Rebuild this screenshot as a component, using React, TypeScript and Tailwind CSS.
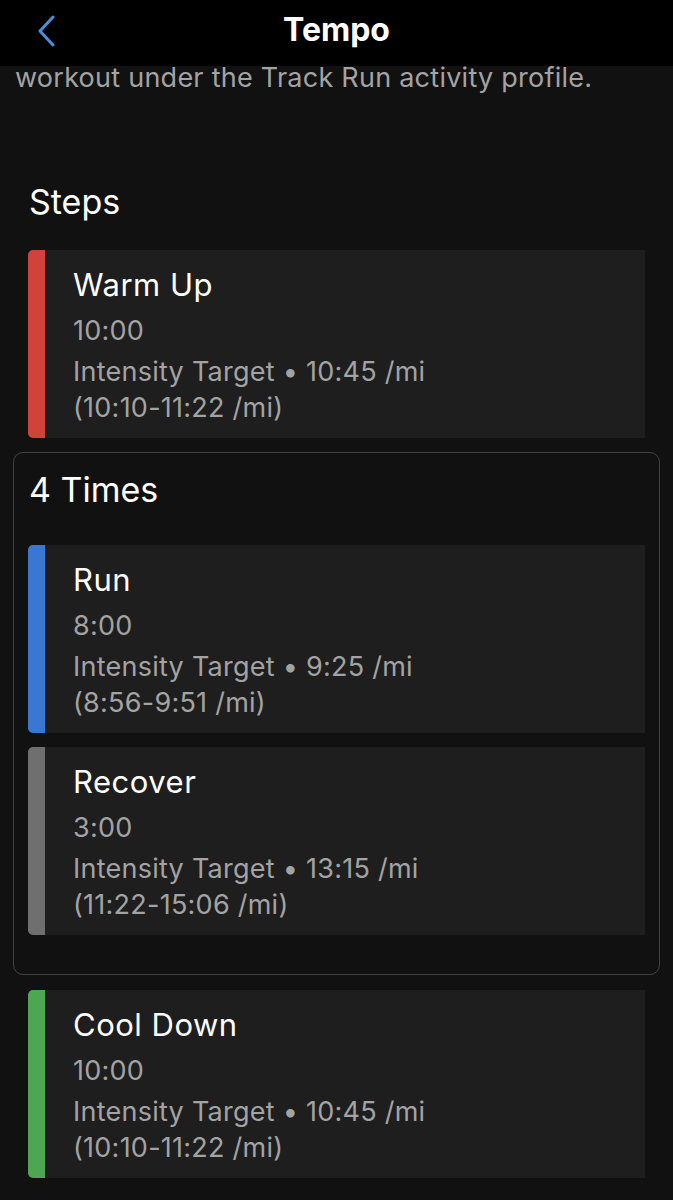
import React from 'react';

const font = { fontFamily: 'Inter, Roboto, "Noto Sans", sans-serif' };

type Step = {
  name: string;
  duration: string;
  target: string;
  range: string;
  bar: string;
};

const warmUp: Step = { name: 'Warm Up', duration: '10:00', target: '10:45 /mi', range: '(10:10-11:22 /mi)', bar: 'bg-[#d1433a]' };
const repeat: Step[] = [
  { name: 'Run', duration: '8:00', target: '9:25 /mi', range: '(8:56-9:51 /mi)', bar: 'bg-[#3a77d2]' },
  { name: 'Recover', duration: '3:00', target: '13:15 /mi', range: '(11:22-15:06 /mi)', bar: 'bg-[#6f6f6f]' },
];
const coolDown: Step = { name: 'Cool Down', duration: '10:00', target: '10:45 /mi', range: '(10:10-11:22 /mi)', bar: 'bg-[#4ea652]' };

function StepCard({ step }: { step: Step }) {
  return (
    <div className="flex h-[188px] bg-[#1e1e1e] rounded-l-[5px] overflow-hidden">
      <div className={`w-[17px] shrink-0 ${step.bar}`} />
      <div className="pl-[28px] pt-[13px] pb-[11px]">
        <div className="text-[31px] leading-[44px] tracking-[0.5px] text-white">{step.name}</div>
        <div className="mt-[6px] text-[27px] leading-[36px] tracking-[0.25px] text-[#a3a3a3]">{step.duration}</div>
        <div className="mt-[5px] text-[27px] leading-[36px] tracking-[0.25px] text-[#a3a3a3]">
          Intensity Target • {step.target}
          <br />
          {step.range}
        </div>
      </div>
    </div>
  );
}

export default function App() {
  return (
    <div className="w-[673px] h-[1200px] bg-[#111111] overflow-hidden" style={font}>
      <header className="h-[66px] bg-black grid grid-cols-[1fr_auto_1fr] items-center">
        <div className="pl-[37px] pb-[4px]">
          <svg width="18" height="32" viewBox="0 0 18 32" fill="none">
            <polyline points="16,2 3,16 16,30" stroke="#4d8ddc" strokeWidth="3" strokeLinecap="round" strokeLinejoin="round" />
          </svg>
        </div>
        <h1 className="text-[32px] font-bold text-white leading-[40px] pb-[7px]">Tempo</h1>
        <div />
      </header>

      <p className="pl-[15px] text-[27px] leading-[26px] tracking-[0.25px] text-[#a3a3a3] -mt-[1px]">
        workout under the Track Run activity profile.
      </p>

      <h2 className="mt-[91px] pl-[29px] text-[34px] leading-[40px] text-white">Steps</h2>

      <div className="mt-[28px] px-[13px] flex flex-col">
        <div className="px-[15px]">
          <StepCard step={warmUp} />
        </div>

        <div className="mt-[14px] border border-[#414141] rounded-[10px] px-[14px] pt-[17px] pb-[39px]">
          <div className="pl-[1px] text-[34px] leading-[40px] text-white">4 Times</div>
          <div className="mt-[35px] flex flex-col gap-[14px]">
            {repeat.map((s) => (
              <StepCard key={s.name} step={s} />
            ))}
          </div>
        </div>

        <div className="mt-[15px] px-[15px]">
          <StepCard step={coolDown} />
        </div>
      </div>
    </div>
  );
}
